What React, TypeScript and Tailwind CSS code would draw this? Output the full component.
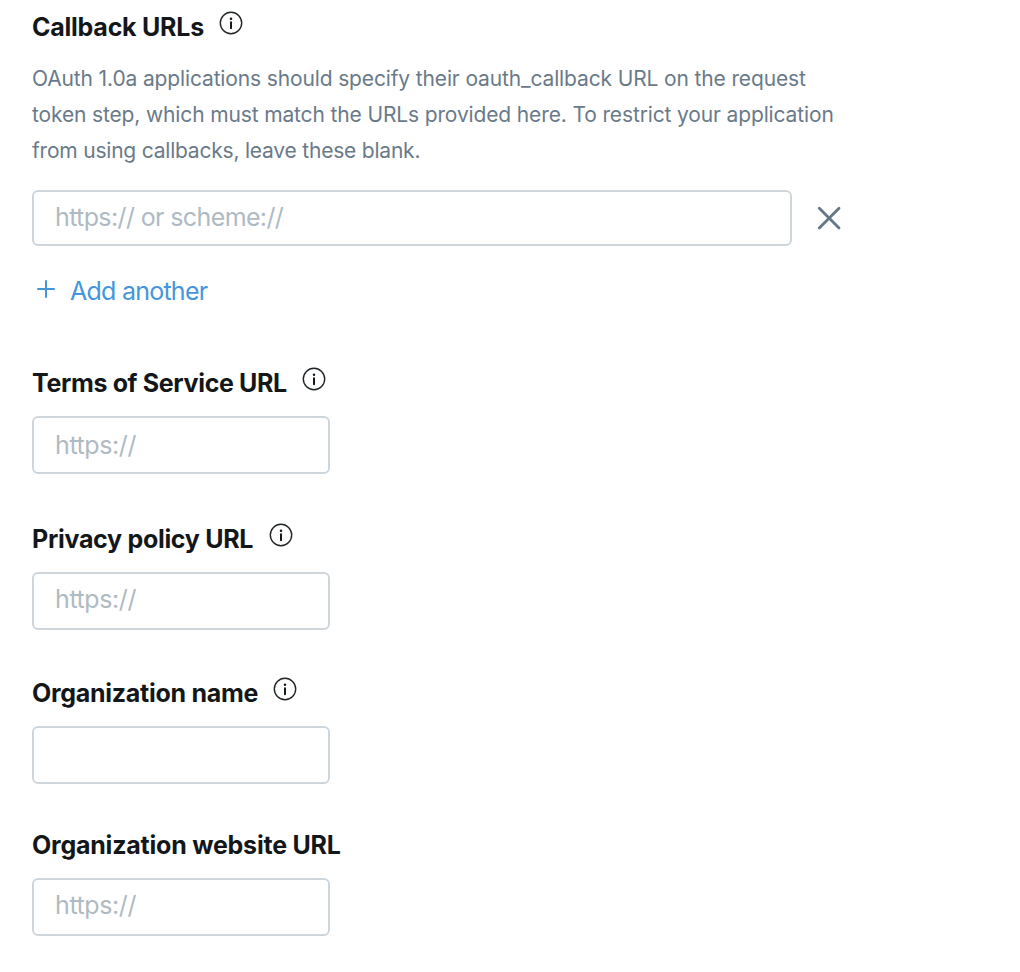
import React from "react";

function Info() {
  return (
    <svg className="block shrink-0" width="24" height="24" viewBox="0 0 24 24" fill="none">
      <circle cx="12" cy="12" r="10.7" stroke="#222527" strokeWidth="1.4" />
      <circle cx="12" cy="7.7" r="1.25" fill="#14171a" />
      <path d="M12 11.2V17.2" stroke="#14171a" strokeWidth="2" strokeLinecap="round" />
    </svg>
  );
}

type HeadingProps = { label: string; textClass: string; info?: boolean };

function Heading({ label, textClass, info = true }: HeadingProps) {
  return (
    <div className="flex h-8 items-start">
      <h2 className={"shrink-0 whitespace-nowrap text-[25px] leading-8 font-bold " + textClass}>{label}</h2>
      {info && <Info />}
    </div>
  );
}

type FieldProps = HeadingProps & {
  sectionClass: string;
  inputClass?: string;
  placeholder?: string;
};

function Field({ label, textClass, info, sectionClass, inputClass = "", placeholder }: FieldProps) {
  return (
    <section className={sectionClass}>
      <Heading label={label} textClass={textClass} info={info} />
      <input
        aria-label={label}
        placeholder={placeholder}
        className={"mt-[17px] block h-[58px] w-[298px] rounded-md border-2 border-[#ced6db] px-[21px] text-[25px] tracking-[-0.4px] outline-none placeholder:text-[#afbac3] " + inputClass}
      />
    </section>
  );
}

export default function App() {
  return (
    <main className="h-[972px] w-[1020px] overflow-hidden bg-white pl-8 pt-[11px] font-['Inter',sans-serif] text-[#14171a]">
      <Heading label="Callback URLs" textClass="w-[187px] tracking-[-0.24px]" />
      <p className="mt-[18px] whitespace-nowrap text-[21px] leading-9 tracking-[-0.138px] text-[#6a7a89]">
        OAuth 1.0a applications should specify their oauth_callback URL on the request<br />
        token step, which must match the URLs provided here. To restrict your application<br />
        <span className="tracking-[-0.21px]">from using callbacks, leave these blank.</span>
      </p>
      <div className="mt-[21px] flex items-center">
        <input
          aria-label="Callback URL"
          placeholder="https:// or scheme://"
          className="h-14 w-[760px] rounded-md border-2 border-[#ced6db] px-[21px] pb-0.5 text-[25px] tracking-[-0.62px] outline-none placeholder:text-[#afbac3]"
        />
        <svg className="ml-[25px]" width="24" height="24" viewBox="0 0 24 24" stroke="#657786" strokeWidth="2.8" strokeLinecap="round">
          <path d="M2.3 2.3L22 22M22 2.3L2.3 22" />
        </svg>
      </div>
      <button className="mt-[29px] flex h-8 items-start pl-[5px] text-[25px] leading-8 tracking-[-0.75px] text-[#4496dc]">
        <svg className="mt-[5px] mr-[15px]" width="18" height="18" viewBox="0 0 18 18" stroke="#4496dc" strokeWidth="2" strokeLinecap="round">
          <path d="M9 1V17M1 9H17" />
        </svg>
        Add another
      </button>
      <Field label="Terms of Service URL" textClass="w-[270.4px] tracking-[-0.35px]" sectionClass="mt-[60px]" placeholder="https://" />
      <Field label="Privacy policy URL" textClass="w-[236.6px] tracking-[-0.3px]" sectionClass="mt-[49px]" inputClass="pb-1" placeholder="https://" />
      <Field label="Organization name" textClass="w-[240.6px] tracking-[-0.28px]" sectionClass="mt-[47px]" />
      <Field label="Organization website URL" textClass="tracking-[-0.22px]" sectionClass="mt-[45px]" inputClass="pb-1" placeholder="https://" info={false} />
    </main>
  );
}
